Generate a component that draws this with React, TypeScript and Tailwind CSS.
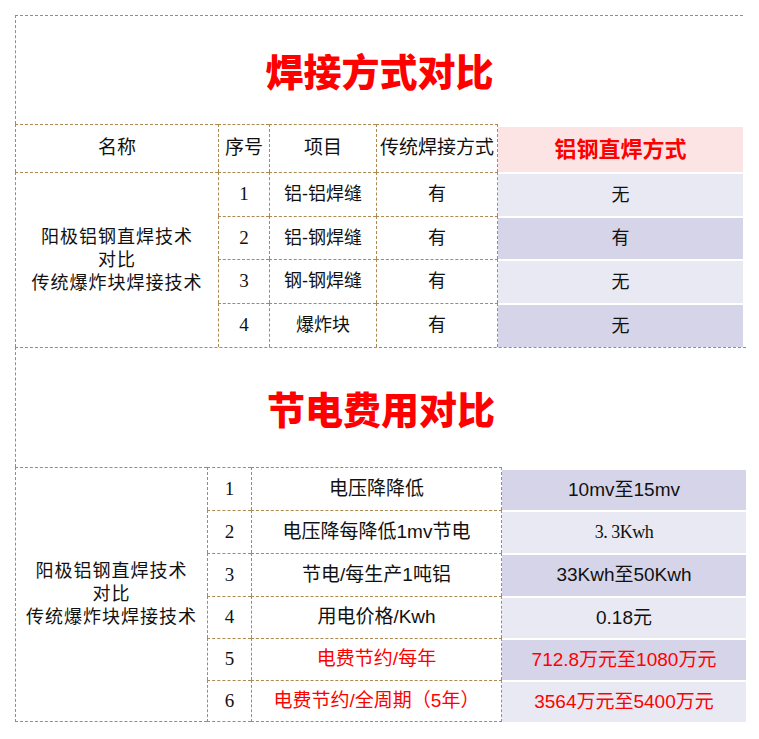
import React from 'react';

const line = 'border-dashed border-[#ad8a52]';
const serif = "font-['Liberation_Serif','Noto_Sans_CJK_SC',serif]";
const sans = "font-['Liberation_Sans','Noto_Sans_CJK_SC',sans-serif]";

const weldRows = [
  { no: '1', item: '铝-铝焊缝', old: '有', next: '无', bg: 'bg-[#e9e9f3]' },
  { no: '2', item: '铝-钢焊缝', old: '有', next: '有', bg: 'bg-[#d6d4e8]' },
  { no: '3', item: '钢-钢焊缝', old: '有', next: '无', bg: 'bg-[#e9e9f3]' },
  { no: '4', item: '爆炸块', old: '有', next: '无', bg: 'bg-[#d6d4e8]' },
];

const powerRows = [
  { no: '1', item: '电压降降低', value: '10mv至15mv', bg: 'bg-[#d6d4e8]', red: false, serifValue: false },
  { no: '2', item: '电压降每降低1mv节电', value: '3. 3Kwh', bg: 'bg-[#e9e9f3]', red: false, serifValue: true },
  { no: '3', item: '节电/每生产1吨铝', value: '33Kwh至50Kwh', bg: 'bg-[#d6d4e8]', red: false, serifValue: false },
  { no: '4', item: '用电价格/Kwh', value: '0.18元', bg: 'bg-[#e9e9f3]', red: false, serifValue: false },
  { no: '5', item: '电费节约/每年', value: '712.8万元至1080万元', bg: 'bg-[#d6d4e8]', red: true, serifValue: false },
  { no: '6', item: '电费节约/全周期（5年）', value: '3564万元至5400万元', bg: 'bg-[#e9e9f3]', red: true, serifValue: false },
];

function Title({ text, className }: { text: string; className: string }) {
  return (
    <div className={`flex items-center justify-center border-t border-l ${line} ${className}`}>
      <h2 className="font-['Noto_Sans_CJK_SC',sans-serif] text-[38px] font-black leading-none text-[#ff0000]">
        {text}
      </h2>
    </div>
  );
}

export default function App() {
  return (
    <div className="min-h-screen bg-white pt-[15px] pl-[15px] text-[#111]">
      <div className="w-[731px]">
        {/* 焊接方式对比 */}
        <Title text="焊接方式对比" className="h-[109px] w-[728px]" />

        <div className="grid grid-cols-[203px_51px_107px_122px_245px] grid-rows-[48px_44px_43px_44px_44px]">
          <div className={`flex items-center justify-center border-t border-l ${line} ${sans} text-[19px]`}>名称</div>
          <div className={`flex items-center justify-center border-t border-l ${line} ${sans} text-[19px]`}>序号</div>
          <div className={`flex items-center justify-center border-t border-l ${line} ${sans} text-[19px]`}>项目</div>
          <div className={`flex items-center justify-center border-t border-l border-r ${line} ${serif} text-[19px]`}>
            传统焊接方式
          </div>
          <div className={`flex items-center justify-center border-t-[3px] border-white bg-[#fce4e4] ${sans} text-[22px] font-bold text-[#ff0000]`}>
            铝钢直焊方式
          </div>

          <div className={`row-span-4 flex items-center justify-center border-t border-l ${line} ${serif} text-center text-[18px] leading-[23px] tracking-[1px]`}>
            阳极铝钢直焊技术
            <br />
            对比
            <br />
            传统爆炸块焊接技术
          </div>
          {weldRows.map((r) => (
            <React.Fragment key={r.no}>
              <div className={`flex items-center justify-center border-t border-l ${line} ${serif} text-[19px]`}>{r.no}</div>
              <div className={`flex items-center justify-center border-t border-l ${line} ${sans} text-[18px]`}>{r.item}</div>
              <div className={`flex items-center justify-center border-t border-l border-r ${line} ${serif} text-[18px]`}>{r.old}</div>
              <div className={`flex items-center justify-center border-t-2 border-white ${r.bg} ${serif} text-[18px]`}>{r.next}</div>
            </React.Fragment>
          ))}
        </div>

        {/* 节电费用对比 */}
        <Title text="节电费用对比" className="h-[120px] w-[731px]" />

        <div className="grid grid-cols-[192px_44px_251px_244px] grid-rows-[43px_43px_43px_42px_42px_42px]">
          <div className={`row-span-6 flex items-center justify-center border-t border-l border-b ${line} ${serif} text-center text-[18px] leading-[23px] tracking-[1px]`}>
            阳极铝钢直焊技术
            <br />
            对比
            <br />
            传统爆炸块焊接技术
          </div>
          {powerRows.map((r, i) => {
            const last = i === powerRows.length - 1;
            return (
              <React.Fragment key={r.no}>
                <div className={`flex items-center justify-center border-t border-l ${last ? 'border-b' : ''} ${line} ${serif} text-[19px]`}>
                  {r.no}
                </div>
                <div
                  className={`flex items-center justify-center border-t border-l border-r ${last ? 'border-b' : ''} ${line} ${sans} text-[19px] ${r.red ? 'text-[#ff0000]' : ''}`}
                >
                  {r.item}
                </div>
                <div
                  className={`flex items-center justify-center ${i === 0 ? 'border-t-[3px]' : 'border-t-2'} border-white ${r.bg} ${r.serifValue ? `${serif} text-[18px] tracking-[-0.5px]` : `${sans} text-[19px]`} ${r.red ? 'text-[#ff0000]' : ''}`}
                >
                  {r.value}
                </div>
              </React.Fragment>
            );
          })}
        </div>
      </div>
    </div>
  );
}
